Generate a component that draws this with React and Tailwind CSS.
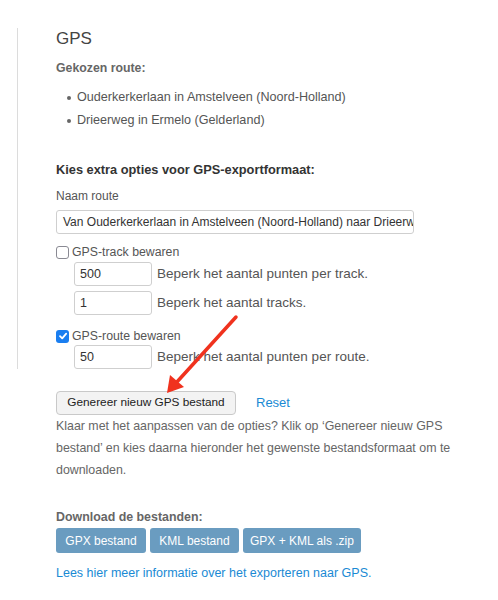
import React from "react";

const font = { fontFamily: '"Liberation Sans", Arial, sans-serif' };

function Check({ checked }) {
  if (checked) {
    return (
      <span className="flex h-[13px] w-[13px] items-center justify-center rounded-[3px] bg-[#1a7ef0]">
        <svg width="10" height="10" viewBox="0 0 10 10">
          <path d="M2 5.2 L4.2 7.4 L8.2 2.6" fill="none" stroke="#fff" strokeWidth="1.8" strokeLinecap="round" strokeLinejoin="round" />
        </svg>
      </span>
    );
  }
  return <span className="block h-[13px] w-[13px] rounded-[3px] border border-[#8a8a93] bg-white" />;
}

function LimitRow({ value, label, className = "" }) {
  return (
    <div className={`flex items-center gap-[5px] pl-[18px] ${className}`}>
      <div className="flex h-[24px] w-[78px] items-center rounded-[3px] border border-[#cfcfcf] bg-white px-[5px] text-[12.5px] text-[#333]">
        {value}
      </div>
      <span className="text-[13.5px] text-[#555]">{label}</span>
    </div>
  );
}

export default function App() {
  return (
    <div className="relative min-h-[600px] bg-white pt-[28px]" style={font}>
      <div className="ml-[17px] border-l border-[#dcdcdc] pl-[38px]">
        <h2 className="text-[17px] leading-[22px] text-[#444]">GPS</h2>
        <p className="mt-[8px] text-[12.3px] font-bold leading-[20px] text-[#666]">Gekozen route:</p>
        <ul className="mt-[8px] pl-[11px] text-[12.6px] leading-[23px] text-[#555]">
          {["Ouderkerkerlaan in Amstelveen (Noord-Holland)", "Drieerweg in Ermelo (Gelderland)"].map((r) => (
            <li key={r} className="flex items-center gap-[6px]">
              <span className="h-[4px] w-[4px] rounded-full bg-[#666]" />
              {r}
            </li>
          ))}
        </ul>
        <p className="mt-[28px] text-[12.8px] font-bold leading-[20px] text-[#333]">
          Kies extra opties voor GPS-exportformaat:
        </p>
        <p className="mt-[7px] text-[12px] leading-[18px] text-[#555]">Naam route</p>
        <div className="mt-[5px] flex h-[24px] w-[358px] items-center overflow-hidden whitespace-nowrap rounded-[3px] border border-[#cfcfcf] px-[6px] text-[12px] text-[#333]">
          Van Ouderkerkerlaan in Amstelveen (Noord-Holland) naar Drieerw
        </div>
        <div className="mt-[9px] flex items-center gap-[3px] text-[12.3px] leading-[18px] text-[#555]">
          <Check checked={false} />
          GPS-track bewaren
        </div>
        <LimitRow className="mt-[1px]" value="500" label="Beperk het aantal punten per track." />
        <LimitRow className="mt-[5px]" value="1" label="Beperk het aantal tracks." />
        <div className="mt-[12px] flex items-center gap-[3px] text-[12.3px] leading-[18px] text-[#555]">
          <Check checked />
          GPS-route bewaren
        </div>
        <LimitRow value="50" label="Beperk het aantal punten per route." />
      </div>

      <div className="w-[470px] pl-[56px]">
        <div className="mt-[22px] flex items-center gap-[20px]">
          <button className="h-[24px] w-[180px] rounded-[4px] border border-[#c9c9c9] bg-[#f3f3f3] text-[11.8px] text-[#222]">
            Genereer nieuw GPS bestand
          </button>
          <a className="text-[13px] text-[#1a8ad4]">Reset</a>
        </div>
        <p className="text-[12.4px] leading-[22px] text-[#666]">
          Klaar met het aanpassen van de opties? Klik op ‘Genereer nieuw GPS bestand’ en kies daarna hieronder het gewenste bestandsformaat om te downloaden.
        </p>
        <p className="mt-[26px] text-[12.4px] font-bold leading-[20px] text-[#666]">Download de bestanden:</p>
        <div className="mt-[1px] flex gap-[4px]">
          {[
            ["GPX bestand", "w-[90px]"],
            ["KML bestand", "w-[89px]"],
            ["GPX + KML als .zip", "w-[118px]"],
          ].map(([t, w]) => (
            <button key={t} className={`h-[25px] ${w} rounded-[3px] bg-[#6a9cc0] text-[12px] text-white`}>
              {t}
            </button>
          ))}
        </div>
        <a className="mt-[10px] block text-[12.5px] leading-[20px] text-[#1a8ad4]">
          Lees hier meer informatie over het exporteren naar GPS.
        </a>
      </div>

      <svg className="pointer-events-none absolute left-0 top-0" width="498" height="600">
        <line x1="236" y1="317" x2="176" y2="383" stroke="#f0321e" strokeWidth="3.5" strokeLinecap="round" />
        <polygon points="167,393 170,375 184,387" fill="#f0321e" />
      </svg>
    </div>
  );
}
